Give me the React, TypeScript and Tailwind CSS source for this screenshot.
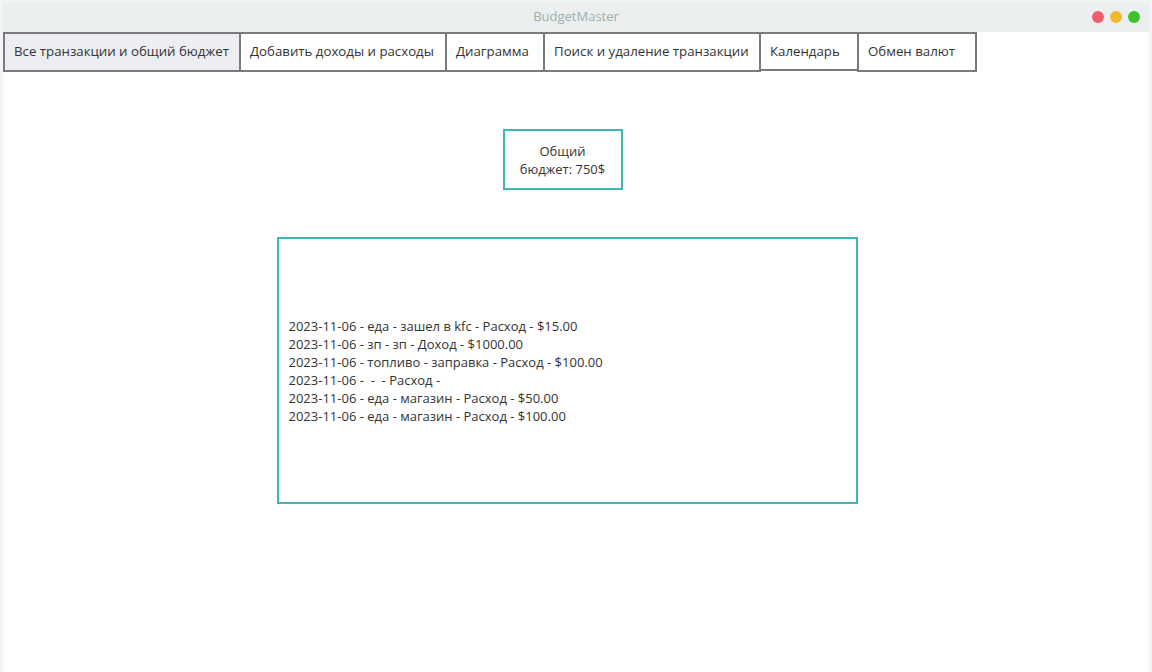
import React from 'react';

const tabs = [
  { label: 'Все транзакции и общий бюджет', w: 'w-[238px]', active: true, h: 'h-[40px]' },
  { label: 'Добавить доходы и расходы', w: 'w-[208px]', active: false, h: 'h-[40px]' },
  { label: 'Диаграмма', w: 'w-[100px]', active: false, h: 'h-[40px]' },
  { label: 'Поиск и удаление транзакции', w: 'w-[218px]', active: false, h: 'h-[40px]' },
  { label: 'Календарь', w: 'w-[100px]', active: false, h: 'h-[39px]' },
  { label: 'Обмен валют', w: 'w-[120px]', active: false, h: 'h-[40px]' },
];

const rows = [
  '2023-11-06 - еда - зашел в kfc - Расход - $15.00',
  '2023-11-06 - зп - зп - Доход - $1000.00',
  '2023-11-06 - топливо - заправка - Расход - $100.00',
  '2023-11-06 -  -  - Расход - ',
  '2023-11-06 - еда - магазин - Расход - $50.00',
  '2023-11-06 - еда - магазин - Расход - $100.00',
];

export default function App() {
  return (
    <div className="w-[1152px] h-[672px] bg-[#f3f4f6] px-[3px] pt-[2px] flex flex-col font-['Open_Sans',sans-serif] text-[13px] text-[#333]">
      <div className="relative h-[30px] shrink-0 bg-[#eceff0] flex items-center justify-center">
        <span className="text-[13px] text-[#9caea8]">BudgetMaster</span>
        <div className="absolute right-[9px] top-[9px] flex gap-[6px]">
          <span className="w-[12px] h-[12px] rounded-full bg-[#ee5d6c]" />
          <span className="w-[12px] h-[12px] rounded-full bg-[#eeb830]" />
          <span className="w-[12px] h-[12px] rounded-full bg-[#3cc22a]" />
        </div>
      </div>
      <div className="flex-1 bg-white flex flex-col">
        <div className="flex items-start">
          {tabs.map((t, i) => (
            <div
              key={t.label}
              className={`${t.w} ${t.h} ${i > 0 ? '-ml-[2px]' : ''} ${t.active ? 'bg-[#eceef1]' : 'bg-white'} border-2 border-[#7a7a7a] flex items-center pl-[9px] whitespace-nowrap text-[13.25px] text-[#333]`}
            >
              {t.label}
            </div>
          ))}
        </div>
        <div className="flex justify-center mt-[57px] pr-[27px]">
          <div className="w-[120px] h-[61px] border-2 border-[#3cb9b4] flex items-center justify-center text-center leading-[18px]">
            Общий<br />бюджет: 750$
          </div>
        </div>
        <div className="flex justify-center mt-[47px] pr-[18px]">
          <div className="w-[581px] h-[267px] border-2 border-[#3cb9b4] flex flex-col justify-center pl-[10px] leading-[18px] whitespace-pre">
            {rows.map((r) => (
              <div key={r}>{r}</div>
            ))}
          </div>
        </div>
      </div>
    </div>
  );
}
